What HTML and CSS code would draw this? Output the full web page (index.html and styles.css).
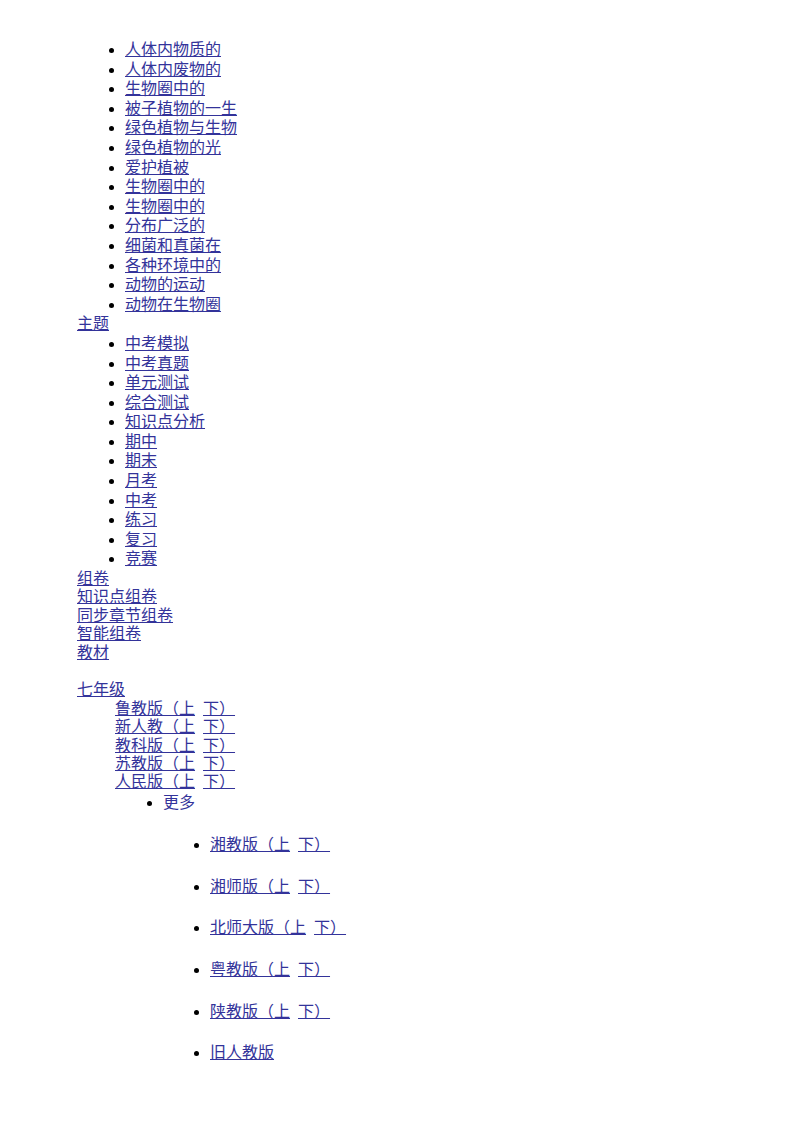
FILE: index.html
```html
<!DOCTYPE html>
<html lang="zh-CN">
<head>
    <meta charset="UTF-8">
    <title>生物 组卷</title>
    <link rel="stylesheet" href="styles.css">
</head>
<body>
    <div class="nav">
        <ul class="topics first">
            <li><a href="#">人体内物质的</a></li>
            <li><a href="#">人体内废物的</a></li>
            <li><a href="#">生物圈中的</a></li>
            <li><a href="#">被子植物的一生</a></li>
            <li><a href="#">绿色植物与生物</a></li>
            <li><a href="#">绿色植物的光</a></li>
            <li><a href="#">爱护植被</a></li>
            <li><a href="#">生物圈中的</a></li>
            <li><a href="#">生物圈中的</a></li>
            <li><a href="#">分布广泛的</a></li>
            <li><a href="#">细菌和真菌在</a></li>
            <li><a href="#">各种环境中的</a></li>
            <li><a href="#">动物的运动</a></li>
            <li><a href="#">动物在生物圈</a></li>
        </ul>
        <div class="head"><a href="#">主题</a></div>
        <ul class="topics">
            <li><a href="#">中考模拟</a></li>
            <li><a href="#">中考真题</a></li>
            <li><a href="#">单元测试</a></li>
            <li><a href="#">综合测试</a></li>
            <li><a href="#">知识点分析</a></li>
            <li><a href="#">期中</a></li>
            <li><a href="#">期末</a></li>
            <li><a href="#">月考</a></li>
            <li><a href="#">中考</a></li>
            <li><a href="#">练习</a></li>
            <li><a href="#">复习</a></li>
            <li><a href="#">竞赛</a></li>
        </ul>
        <div class="links">
            <a href="#">组卷</a>
            <a href="#">知识点组卷</a>
            <a href="#">同步章节组卷</a>
            <a href="#">智能组卷</a>
            <a href="#">教材</a>
        </div>
        <dl class="books">
            <dt><a href="#">七年级</a></dt>
            <dd><a href="#">鲁教版（上</a><a href="#">下）</a></dd>
            <dd><a href="#">新人教（上</a><a href="#">下）</a></dd>
            <dd><a href="#">教科版（上</a><a href="#">下）</a></dd>
            <dd><a href="#">苏教版（上</a><a href="#">下）</a></dd>
            <dd><a href="#">人民版（上</a><a href="#">下）</a></dd>
            <dd class="more-wrap">
                <ul class="more">
                    <li>更多
                        <ul class="others">
                            <li><a href="#">湘教版（上</a><a href="#">下）</a></li>
                            <li><a href="#">湘师版（上</a><a href="#">下）</a></li>
                            <li><a href="#">北师大版（上</a><a href="#">下）</a></li>
                            <li><a href="#">粤教版（上</a><a href="#">下）</a></li>
                            <li><a href="#">陕教版（上</a><a href="#">下）</a></li>
                            <li><a href="#">旧人教版</a></li>
                        </ul>
                    </li>
                </ul>
            </dd>
        </dl>
    </div>
</body>
</html>
```

FILE: styles.css
```css
body {
    margin: 0;
    background: #fff;
    color: #33339a;
    font-family: "Liberation Serif", "Noto Sans CJK SC", serif;
    font-size: 16px;
}
a {
    color: #33339a;
    text-decoration: underline;
}
.nav {
    padding: 40px 0 40px 77px;
}
.topics {
    margin: 0;
    padding-left: 48px;
    line-height: 19.6px;
}
.topics li::marker {
    color: #000;
}
.head {
    line-height: 19.6px;
}
.links {
    margin-top: 1px;
    line-height: 18.4px;
}
.links a {
    display: block;
    width: max-content;
}
.books {
    margin: 19.4px 0 0;
    line-height: 18.4px;
}
.books dt {
    margin: 0;
}
.books dd {
    margin: 0 0 0 38px;
}
.books dd a + a {
    margin-left: 8px;
}
.more {
    margin: 1.6px 0 0;
    padding-left: 48px;
    line-height: 19.6px;
}
.more li::marker,
.others li::marker {
    color: #000;
}
.others {
    margin: 0;
    padding-left: 47px;
    line-height: 18.4px;
    list-style-type: disc;
}
.others li {
    margin-top: 23.2px;
}
.others li a + a {
    margin-left: 8px;
}
```
